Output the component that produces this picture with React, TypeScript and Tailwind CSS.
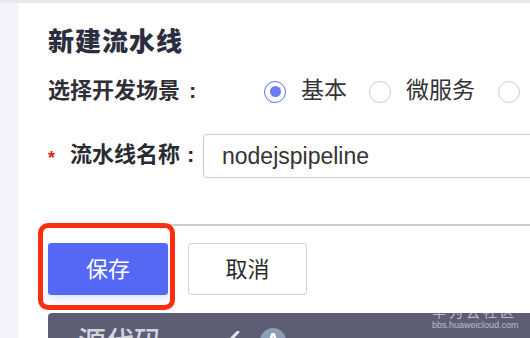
export default function App() {
  return (
    <div
      className="w-[530px] h-[338px] overflow-hidden flex flex-col bg-white"
      style={{ fontFamily: '"Liberation Sans", "Noto Sans CJK SC", sans-serif' }}
    >
      {/* Top edge */}
      <div className="h-[3px] bg-[#e8e8ed] shrink-0" />

      <div className="flex flex-1 min-h-0">
        {/* Side rail */}
        <div className="w-[18px] bg-[#f3f4fb] shrink-0" />

        {/* Form panel */}
        <div className="flex-1 min-w-0 relative pl-[30px] pt-[21px]">
          <h2 className="h-[36px] flex items-center text-[26px] font-extrabold tracking-[1px] text-[#2d2d40]">
            新建流水线
          </h2>

          <div className="mt-[13px] h-[34px] flex items-center">
            <span className="w-[216px] shrink-0 text-[22px] font-semibold text-[#2e2e36]">
              选择开发场景<span className="ml-[9px]">:</span>
            </span>
            <div className="flex items-center pt-[3px] shrink-0">
              <span className="w-[22px] h-[22px] rounded-full border border-[#5d6cf2] flex items-center justify-center">
                <span className="w-[11px] h-[11px] rounded-full bg-[#6a7bff]" />
              </span>
              <span className="ml-[15px] text-[23px] text-[#333] -mt-[3px]">基本</span>
              <span className="ml-[22px] w-[22px] h-[22px] rounded-full border border-[#cfcfcf]" />
              <span className="ml-[15px] text-[23px] text-[#333] -mt-[3px]">微服务</span>
              <span className="ml-[23px] w-[22px] h-[22px] rounded-full border border-[#cfcfcf]" />
            </div>
          </div>

          <div className="mt-[27px] flex items-center">
            <span className="w-[22px] shrink-0 text-[#e8231b] text-[18px] font-bold mt-[4px]">*</span>
            <span className="w-[133px] shrink-0 text-[22px] font-bold text-[#2a2a32] -mt-[4px]">
              流水线名称<span className="ml-[7px]">:</span>
            </span>
            <div className="w-[340px] shrink-0 h-[44px] border border-[#c9c9c9] rounded-[4px] flex items-center pl-[18px] text-[23px] text-[#333]">
              nodejspipeline
            </div>
          </div>

          {/* Divider */}
          <div className="mt-[46px] h-[2px] bg-[#cdcdcd]" />

          {/* Actions */}
          <div className="mt-[17px] flex gap-[20px]">
            <div className="relative">
              <button className="w-[120px] h-[52px] rounded-[3px] bg-[#5468f5] text-white text-[22px] shadow-[0_4px_8px_rgba(84,104,245,0.18)]">
                保存
              </button>
              <span className="absolute -left-[10px] -top-[20px] -right-[7px] -bottom-[15px] border-[5px] border-[#fb2f0f] rounded-[10px] pointer-events-none" />
            </div>
            <button className="w-[119px] h-[52px] rounded-[3px] border border-[#d2d2d2] bg-white text-[22px] text-[#2a2a2a]">
              取消
            </button>
          </div>

          {/* Next card, cut off */}
          <div className="mt-[18px] h-[40px] bg-[#5d5d74] rounded-tl-[4px] flex items-start pl-[30px] pt-[16px] relative">
            <span className="text-[28px] leading-none font-medium text-[#d3d3de]">源代码</span>
            <svg className="ml-[62px] mt-[2px]" width="16" height="12" viewBox="0 0 16 12">
              <path d="M14 1 L3 12" stroke="#e3e3ea" strokeWidth="3" strokeLinecap="round" />
            </svg>
            <span className="ml-[20px] -mt-[1px] w-[26px] h-[26px] rounded-full bg-[#8e9cb5] flex justify-center text-white text-[18px] font-bold leading-none pt-[3px]">
              A
            </span>

            {/* Watermark */}
            <div className="absolute left-[384px] -top-[8px] flex flex-col items-start text-white/60">
              <span className="text-[14px] leading-none tracking-[3px]">华为云社区</span>
              <span className="text-[9px] leading-none mt-[2px]">bbs.huaweicloud.com</span>
            </div>
          </div>
        </div>
      </div>
    </div>
  );
}
